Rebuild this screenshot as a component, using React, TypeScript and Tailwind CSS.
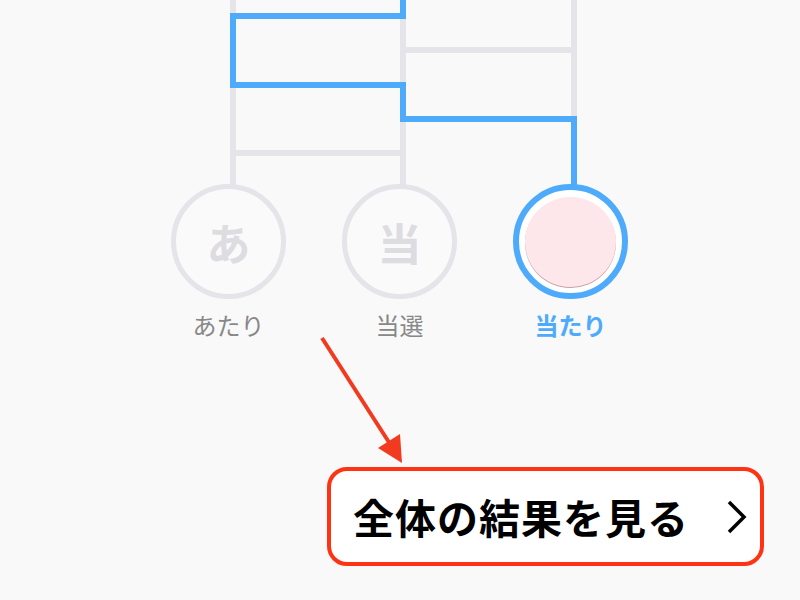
type Goal = {
  mark: string;
  label: string;
  picked?: boolean;
};

const goals: Goal[] = [
  { mark: "あ", label: "あたり" },
  { mark: "当", label: "当選" },
  { mark: "", label: "当たり", picked: true },
];

const font = { fontFamily: '"Noto Sans CJK JP", "Noto Sans", sans-serif' };

// amidakuji ladder: gray rails + rungs, the chosen route drawn over in blue
const Ladder = () => (
  <svg width="800" height="186" viewBox="0 0 800 186" className="block">
    <g stroke="#e4e4e9" strokeWidth="6" fill="none">
      <line x1="233" y1="0" x2="233" y2="186" />
      <line x1="403" y1="0" x2="403" y2="186" />
      <line x1="574" y1="0" x2="574" y2="186" />
      <line x1="403" y1="50" x2="574" y2="50" />
      <line x1="233" y1="153" x2="403" y2="153" />
    </g>
    <path
      d="M403 0 V16 H233 V85 H403 V119 H574 V186"
      stroke="#4eabfb"
      strokeWidth="6"
      fill="none"
      strokeLinejoin="miter"
    />
  </svg>
);

const GoalItem = ({ goal }: { goal: Goal }) => (
  <div className="w-[171px] flex flex-col items-center">
    {goal.picked ? (
      <div className="w-[115px] h-[115px] rounded-full border-[6px] border-[#4eabfb] bg-white flex items-center justify-center">
        <div className="w-[91px] h-[90px] rounded-full bg-[#fde7ea] shadow-[0_1px_0_#c9a0a4]" />
      </div>
    ) : (
      <div className="w-[115px] h-[115px] rounded-full border-[5px] border-[#e4e4e9] bg-[#fafafb] flex items-center justify-center">
        <span className="text-[44px] font-bold text-[#dcdce1] leading-none">
          {goal.mark}
        </span>
      </div>
    )}
    <span
      className={
        goal.picked
          ? "mt-[8px] text-[24px] leading-[36px] font-bold text-[#4eabfb]"
          : "mt-[8px] text-[24px] leading-[36px] text-[#888888]"
      }
    >
      {goal.label}
    </span>
  </div>
);

export default function App() {
  return (
    <div
      className="relative w-[800px] h-[600px] overflow-hidden bg-[#f9f9fa]"
      style={font}
    >
      <Ladder />

      <div className="flex pl-[143px] -mt-[2px]">
        {goals.map((g) => (
          <GoalItem key={g.label} goal={g} />
        ))}
      </div>

      <div className="flex justify-end pr-[36px] mt-[124px]">
        <button className="w-[437px] h-[99px] rounded-[20px] border-[4px] border-[#ff3314] bg-white flex items-center justify-between pl-[22px] pr-[13px]">
          <span className="text-[41px] font-bold text-black tracking-[1px] leading-none">
            全体の結果を見る
          </span>
          <svg width="22" height="34" viewBox="0 0 22 34" className="mt-[1px]">
            <polyline
              points="4,2 19,17 4,32"
              fill="none"
              stroke="#000"
              strokeWidth="3.5"
              strokeLinejoin="miter"
            />
          </svg>
        </button>
      </div>

      {/* red pointer arrow */}
      <svg
        width="800"
        height="600"
        viewBox="0 0 800 600"
        className="absolute left-0 top-0 pointer-events-none"
      >
        <line x1="322" y1="338" x2="392" y2="447" stroke="#f23a1f" strokeWidth="4" />
        <polygon points="402,463 378,448 400,434" fill="#f23a1f" />
      </svg>
    </div>
  );
}
